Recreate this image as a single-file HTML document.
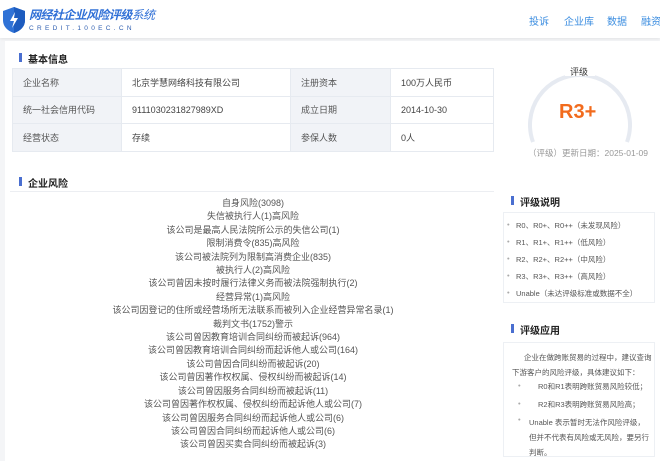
<!DOCTYPE html>
<html><head><meta charset="utf-8"><style>
*{margin:0;padding:0;box-sizing:border-box}
body{width:660px;height:452px;overflow:hidden;background:#f4f5f7;font-family:"Liberation Sans","Noto Sans CJK SC",sans-serif;font-size:9px;color:#333;position:relative}
.hdr{position:absolute;left:0;top:0;width:660px;height:38px;background:#fff;box-shadow:0 1px 3px rgba(0,0,0,.08)}
.abs{position:absolute;white-space:nowrap}
.nav{position:absolute;top:13px;font-size:10px;color:#3b8de0;white-space:nowrap}
.card{position:absolute;left:5px;top:41px;width:660px;height:420px;background:#fff}
.tt{position:absolute;font-size:10px;font-weight:bold;color:#222}
.tt:before{content:"";position:absolute;left:-9px;top:2px;width:3px;height:9px;background:#4a6fd0}
table{position:absolute;left:12px;top:68px;border-collapse:collapse;width:482px}
td{border:1px solid #e6eaf0;height:27.5px;padding-left:10px;color:#444}
td.l{background:#f1f3f7;color:#555}
.risk{position:absolute;left:12px;top:197px;width:482px;text-align:center;line-height:13.4px;color:#555;font-size:9px}
.box{position:absolute;left:503px;width:152px;border:1px solid #edf0f4;background:#fff}
.li{position:absolute;left:12px;font-size:7.5px;color:#555;white-space:nowrap}
.li:before{content:"•";position:absolute;left:-9px;color:#aaa}
</style></head><body>
<div class="hdr">
<svg class="abs" style="left:2px;top:6px" width="24" height="28" viewBox="0 0 24 28"><path d="M12 1L23 5V14C23 21 18 25 12 27C6 25 1 21 1 14V5Z" fill="#2f72d6"/><path d="M12 1L23 5V14C23 21 18 25 12 27Z" fill="#1d5cbf"/><path d="M13 6L8 15H12L10 22L16 12H12Z" fill="#fff"/></svg>
<div class="abs" style="left:29px;top:8px;font-size:12px;line-height:14px;font-weight:bold;font-style:italic;color:#2f6fd6;letter-spacing:-0.6px">网经社企业风险评级<span style="font-weight:normal">系统</span></div>
<div class="abs" style="left:29px;top:25px;font-size:6.5px;line-height:7px;color:#2f5fb0;letter-spacing:3.3px">CREDIT.100EC.CN</div>
<div class="nav" style="left:529px">投诉</div>
<div class="nav" style="left:564px">企业库</div>
<div class="nav" style="left:607px">数据</div>
<div class="nav" style="left:641px">融资</div>
</div>
<div class="card"></div>
<div class="tt" style="left:28px;top:51px">基本信息</div>
<table>
<tr><td class="l" style="width:109px">企业名称</td><td style="width:169px">北京学慧网络科技有限公司</td><td class="l" style="width:100px">注册资本</td><td>100万人民币</td></tr>
<tr><td class="l">统一社会信用代码</td><td>9111030231827989XD</td><td class="l">成立日期</td><td>2014-10-30</td></tr>
<tr><td class="l">经营状态</td><td>存续</td><td class="l">参保人数</td><td>0人</td></tr>
</table>
<svg class="abs" style="left:525px;top:60px" width="110" height="90" viewBox="0 0 110 90"><path d="M8 82A50 50 0 1 1 102 82" fill="none" stroke="#e6eaf1" stroke-width="4"/><rect x="40" y="4" width="30" height="12" fill="#fff"/></svg>
<div class="abs" style="left:570px;top:65px;font-size:9px;color:#333">评级</div>
<div class="abs" style="left:559px;top:101px;font-size:20px;font-weight:bold;color:#f26b1d">R3+</div>
<div class="abs" style="left:528px;top:147px;font-size:8.5px;color:#999">（评级）更新日期：2025-01-09</div>
<div class="tt" style="left:28px;top:175px">企业风险</div>
<div class="abs" style="left:10px;top:191px;width:484px;height:1px;background:#eceef2"></div>
<div class="risk">自身风险(3098)<br>失信被执行人(1)高风险<br>该公司是最高人民法院所公示的失信公司(1)<br>限制消费令(835)高风险<br>该公司被法院列为限制高消费企业(835)<br>被执行人(2)高风险<br>该公司曾因未按时履行法律义务而被法院强制执行(2)<br>经营异常(1)高风险<br>该公司因登记的住所或经营场所无法联系而被列入企业经营异常名录(1)<br>裁判文书(1752)警示<br>该公司曾因教育培训合同纠纷而被起诉(964)<br>该公司曾因教育培训合同纠纷而起诉他人或公司(164)<br>该公司曾因合同纠纷而被起诉(20)<br>该公司曾因著作权权属、侵权纠纷而被起诉(14)<br>该公司曾因服务合同纠纷而被起诉(11)<br>该公司曾因著作权权属、侵权纠纷而起诉他人或公司(7)<br>该公司曾因服务合同纠纷而起诉他人或公司(6)<br>该公司曾因合同纠纷而起诉他人或公司(6)<br>该公司曾因买卖合同纠纷而被起诉(3)</div>
<div class="tt" style="left:520px;top:194px">评级说明</div>
<div class="box" style="top:212px;height:91px">
<div class="li" style="top:7px">R0、R0+、R0++（未发现风险）</div>
<div class="li" style="top:24px">R1、R1+、R1++（低风险）</div>
<div class="li" style="top:41px">R2、R2+、R2++（中风险）</div>
<div class="li" style="top:58px">R3、R3+、R3++（高风险）</div>
<div class="li" style="top:75px">Unable（未达评级标准或数据不全）</div>
</div>
<div class="tt" style="left:520px;top:322px">评级应用</div>
<div class="box" style="top:342px;height:115px;font-size:7.5px;color:#555">
<div class="abs" style="left:8px;top:7px;width:140px;line-height:15px;text-indent:12px;white-space:normal">企业在做跨账贸易的过程中，建议查询下游客户的风险评级，具体建议如下：</div>
<div class="abs" style="left:14px;top:38px;color:#aaa">•</div>
<div class="abs" style="left:34px;top:38px">R0和R1表明跨账贸易风险较低；</div>
<div class="abs" style="left:14px;top:56px;color:#aaa">•</div>
<div class="abs" style="left:34px;top:56px">R2和R3表明跨账贸易风险高；</div>
<div class="abs" style="left:14px;top:72px;color:#aaa">•</div>
<div class="abs" style="left:25px;top:72px;width:122px;line-height:15px;white-space:normal">Unable 表示暂时无法作风险评级，但并不代表有风险或无风险，要另行判断。</div>
</div>
</body></html>
